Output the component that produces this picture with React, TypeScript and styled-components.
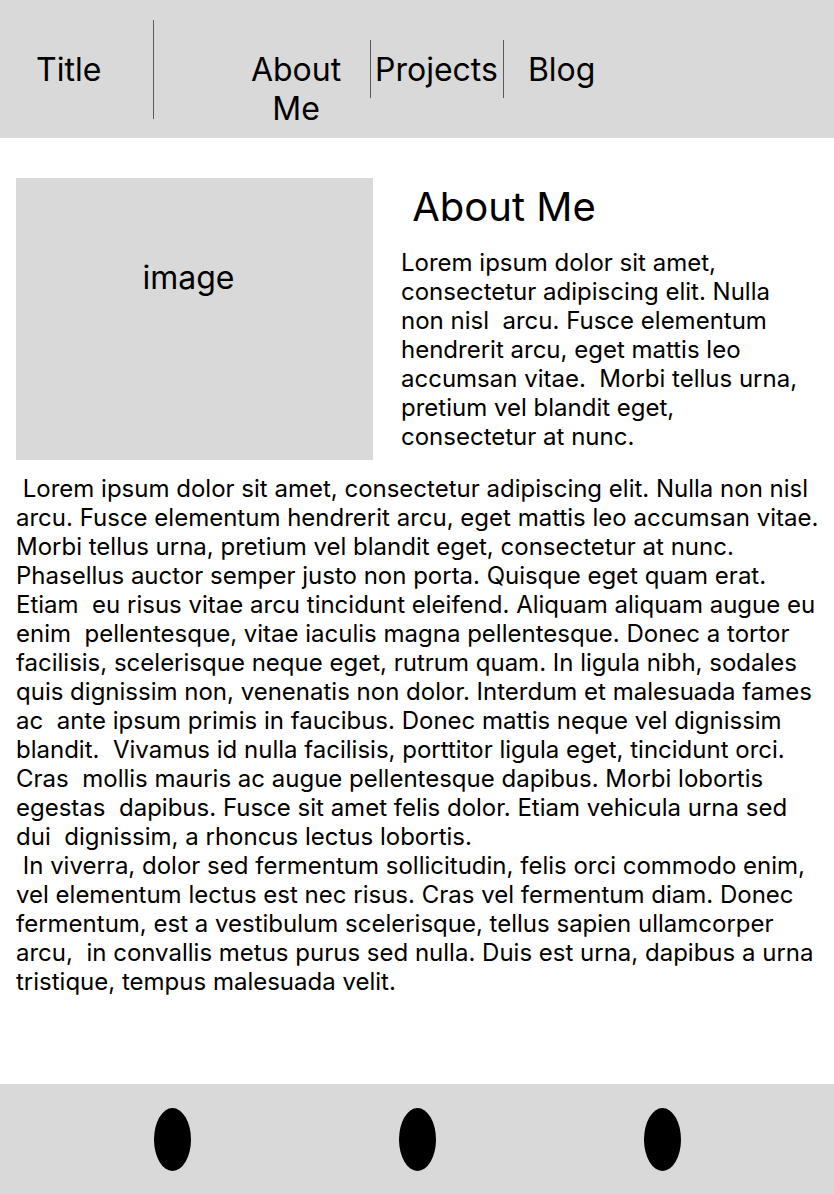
import React from "react";
import styled, { createGlobalStyle } from "styled-components";

const GlobalStyle = createGlobalStyle`
  html, body {
    margin: 0;
    padding: 0;
    background: #ffffff;
  }
  body {
    font-family: Inter, "Noto Sans", "Liberation Sans", sans-serif;
    color: #000000;
  }
`;

const Page = styled.div`
  min-height: 100vh;
  display: flex;
  flex-direction: column;
`;

const Header = styled.header`
  height: 138px;
  background: #d9d9d9;
  display: flex;
  align-items: center;
  padding-left: 36px;
  flex-shrink: 0;
`;

const NavItem = styled.div<{ $width?: number; $ml?: number }>`
  font-size: 32px;
  line-height: 39px;
  height: 39px;
  width: ${(p) => (p.$width ? `${p.$width}px` : "auto")};
  margin-left: ${(p) => p.$ml ?? 0}px;
  text-align: center;
  white-space: ${(p) => (p.$width ? "normal" : "nowrap")};
  overflow: visible;
`;

const TitleItem = styled(NavItem)`
  text-align: left;
`;

const Divider = styled.div<{ $h: number; $ml?: number }>`
  width: 1px;
  height: ${(p) => p.$h}px;
  margin-left: ${(p) => p.$ml ?? 0}px;
  background: #5a5a5a;
  flex-shrink: 0;
`;

const Main = styled.main`
  padding: 40px 8px 0 16px;
  display: flex;
  flex-direction: column;
  gap: 14px;
`;

const Intro = styled.section`
  display: flex;
  gap: 28px;
`;

const ImageBox = styled.div`
  width: 357px;
  height: 282px;
  flex-shrink: 0;
  background: #d9d9d9;
  box-sizing: border-box;
  padding: 80px 12px 0 0;
  text-align: center;
  font-size: 32px;
  line-height: 39px;
`;

const IntroText = styled.div`
  width: 405px;
  padding-top: 5px;
  display: flex;
  flex-direction: column;
  gap: 17px;
`;

const Heading = styled.h1`
  margin: 0;
  font-size: 40px;
  line-height: 48px;
  font-weight: 400;
  white-space: pre-wrap;
`;

const Paragraph = styled.p`
  margin: 0;
  font-size: 24px;
  line-height: 29px;
  white-space: pre-wrap;
`;

const Footer = styled.footer`
  margin-top: auto;
  height: 110px;
  background: #d9d9d9;
  display: flex;
  align-items: center;
  justify-content: center;
  gap: 208px;
  flex-shrink: 0;
`;

const Dot = styled.span`
  width: 37px;
  height: 63px;
  border-radius: 50%;
  background: #000000;
`;

const body = ` Lorem ipsum dolor sit amet, consectetur adipiscing elit. Nulla non nisl arcu. Fusce elementum hendrerit arcu, eget mattis leo accumsan vitae. Morbi tellus urna, pretium vel blandit eget, consectetur at nunc. Phasellus auctor semper justo non porta. Quisque eget quam erat. Etiam  eu risus vitae arcu tincidunt eleifend. Aliquam aliquam augue eu enim  pellentesque, vitae iaculis magna pellentesque. Donec a tortor facilisis, scelerisque neque eget, rutrum quam. In ligula nibh, sodales quis dignissim non, venenatis non dolor. Interdum et malesuada fames ac  ante ipsum primis in faucibus. Donec mattis neque vel dignissim blandit.  Vivamus id nulla facilisis, porttitor ligula eget, tincidunt orci. Cras  mollis mauris ac augue pellentesque dapibus. Morbi lobortis egestas  dapibus. Fusce sit amet felis dolor. Etiam vehicula urna sed dui  dignissim, a rhoncus lectus lobortis.
 In viverra, dolor sed fermentum sollicitudin, felis orci commodo enim, vel elementum lectus est nec risus. Cras vel fermentum diam. Donec fermentum, est a vestibulum scelerisque, tellus sapien ullamcorper arcu,  in convallis metus purus sed nulla. Duis est urna, dapibus a urna tristique, tempus malesuada velit.`;

export default function App() {
  return (
    <Page>
      <GlobalStyle />
      <Header>
        <TitleItem $width={117}>Title</TitleItem>
        <Divider $h={99} />
        <NavItem $width={120} $ml={82}>
          About Me
        </NavItem>
        <Divider $h={58} $ml={14} />
        <NavItem $ml={4}>Projects</NavItem>
        <Divider $h={58} $ml={5} />
        <NavItem $ml={24}>Blog</NavItem>
      </Header>
      <Main>
        <Intro>
          <ImageBox>image</ImageBox>
          <IntroText>
            <Heading> About Me</Heading>
            <Paragraph>
              Lorem ipsum dolor sit amet, consectetur adipiscing elit. Nulla non nisl  arcu. Fusce elementum hendrerit arcu, eget mattis leo accumsan vitae.  Morbi tellus urna, pretium vel blandit eget, consectetur at nunc.
            </Paragraph>
          </IntroText>
        </Intro>
        <Paragraph>{body}</Paragraph>
      </Main>
      <Footer>
        <Dot />
        <Dot />
        <Dot />
      </Footer>
    </Page>
  );
}
